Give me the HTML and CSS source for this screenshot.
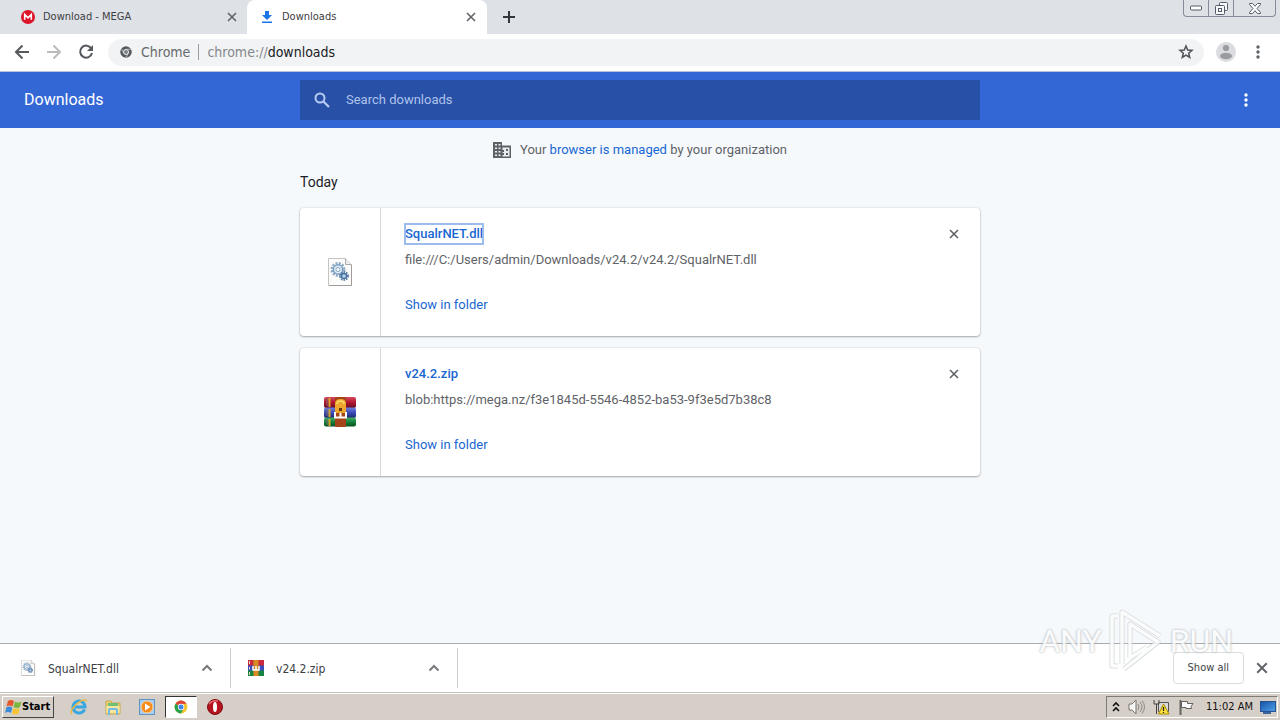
FILE: index.html
```html
<!DOCTYPE html>
<html lang="en">
<head>
<meta charset="utf-8">
<title>Downloads</title>
<link rel="stylesheet" href="styles.css">
</head>
<body>
<svg class="defs" aria-hidden="true">
  <defs>
    <linearGradient id="red" x1="0" y1="0" x2="0" y2="1"><stop offset="0" stop-color="#d8485c"/><stop offset=".5" stop-color="#b01730"/><stop offset="1" stop-color="#650c20"/></linearGradient>
    <linearGradient id="blue" x1="0" y1="0" x2="0" y2="1"><stop offset="0" stop-color="#6f80e0"/><stop offset=".5" stop-color="#3a4cb4"/><stop offset="1" stop-color="#1c2567"/></linearGradient>
    <linearGradient id="green" x1="0" y1="0" x2="0" y2="1"><stop offset="0" stop-color="#46ae68"/><stop offset=".5" stop-color="#14803a"/><stop offset="1" stop-color="#07501e"/></linearGradient>
    <linearGradient id="screen" x1="0" y1="0" x2="1" y2="1"><stop offset="0" stop-color="#1452a8"/><stop offset="1" stop-color="#4fa0e8"/></linearGradient>
  </defs>
  <symbol id="close" viewBox="0 0 10 10"><path d="M1 1l8 8M9 1L1 9" fill="none" stroke="currentColor" stroke-width="1.6"/></symbol>
  <symbol id="dots" viewBox="0 0 4 14"><g fill="currentColor"><circle cx="2" cy="2" r="1.7"/><circle cx="2" cy="7" r="1.7"/><circle cx="2" cy="12" r="1.7"/></g></symbol>
  <symbol id="chevron" viewBox="0 0 12 8"><path d="M1.5 6.5L6 2l4.500 4.500" fill="none" stroke="currentColor" stroke-width="2"/></symbol>
  <symbol id="dll" viewBox="0 0 24 28">
    <path d="M.5.5h17l6 6v21H.5z" fill="#fcfcfa" stroke="#c5c3c2"/>
    <path d="M1 27.500h22.500V7" fill="none" stroke="#a09c9b"/>
    <path d="M17.500.5v6h6" fill="#eee" stroke="#b0aaaa"/>
    <circle cx="10" cy="11.500" r="6.300" fill="none" stroke="#8fabc5" stroke-width="2.400" stroke-dasharray="2 1.300"/>
    <circle cx="10" cy="11.500" r="4.700" fill="#dceaf5" stroke="#7b9dbf" stroke-width="1.400"/>
    <circle cx="10" cy="11.500" r="2" fill="#fff" stroke="#84a5c0"/>
    <circle cx="16" cy="18" r="3.900" fill="none" stroke="#5b7da4" stroke-width="2" stroke-dasharray="1.500 1"/>
    <circle cx="16" cy="18" r="2.500" fill="#b6d3e8" stroke="#456f9f" stroke-width="1.300"/>
  </symbol>
  <symbol id="rar" viewBox="0 0 32 30">
    <rect x="0" y="0" width="32" height="11" rx="2" fill="url(#red)"/>
    <rect x="0" y="10.500" width="32" height="10.500" rx="2" fill="url(#blue)"/>
    <rect x="0" y="20.500" width="32" height="9" rx="2" fill="url(#green)"/>
    <path d="M3 1v8M3 12v7M3 22v6" stroke="#7d6a72" stroke-width="1"/>
    <path d="M5.500 1v9M5.500 12v8M5.500 22v7" stroke="#d9a52e" stroke-width="2"/>
    <rect x="11" y="0" width="11" height="30" rx="1" fill="#a54419"/>
    <path d="M11 16V7q0-5 5.500-5T22 7v9z" fill="#eda62e"/>
    <path d="M13 7q0-3 3.500-3T20 7" fill="none" stroke="#ffe16a" stroke-width="1.500"/>
    <rect x="15" y="11" width="3" height="3" fill="#6d3213"/>
    <path d="M11 15v5.500h11V15M16.500 16v4" fill="none" stroke="#fff" stroke-width="2"/>
  </symbol>
  <symbol id="chrome" viewBox="0 0 24 24">
    <circle cx="12" cy="12" r="11" fill="#f4c430"/>
    <path d="M12 12L2.500 6.500A11 11 0 0 1 21.500 6.500L12 7z" fill="#dc4437"/>
    <path d="M2.500 6.500A11 11 0 0 0 12 23l4.500-8.500L12 12z" fill="#29a04b"/>
    <circle cx="12" cy="12" r="5.500" fill="#fff"/><circle cx="12" cy="12" r="4.300" fill="#4285e8"/>
  </symbol>
</svg>

<header class="tabstrip">
  <div class="tab">
    <svg class="i14" viewBox="0 0 14 14"><circle cx="7" cy="7" r="7" fill="#dc1428"/><path d="M3.700 9.800V4.500L7 7.800l3.300-3.300v5.300" fill="none" stroke="#fff" stroke-width="1.600"/></svg>
    <span class="tab-name">Download - MEGA</span>
    <button class="plain" aria-label="Close Download - MEGA"><svg class="i10"><use href="#close"/></svg></button>
  </div>
  <div class="tab active">
    <svg class="i14" viewBox="0 0 14 14"><path d="M5 1h4v4h3L7 10 2 5h3zM2 11.500h10V13H2z" fill="#1a73e8"/></svg>
    <span class="tab-name">Downloads</span>
    <button class="plain" aria-label="Close Downloads"><svg class="i10"><use href="#close"/></svg></button>
  </div>
  <button class="plain new-tab" aria-label="New tab"><svg class="i12" viewBox="0 0 12 12"><path d="M6 0v12M0 6h12" stroke="#33363b" stroke-width="2"/></svg></button>
  <div class="window-buttons">
    <button aria-label="Minimize"><svg width="12" height="6" viewBox="0 0 12 6"><rect x=".5" y="1" width="11" height="4" rx="1" fill="#fff" stroke="#555b68"/></svg></button>
    <button aria-label="Restore"><svg width="13" height="13" viewBox="0 0 13 13"><g fill="#f6f7f9" stroke="#555b68"><rect x="4.500" y=".5" width="8" height="8" rx="1"/><rect x=".5" y="3.500" width="9" height="9" rx="1"/><rect x="3.500" y="6.500" width="3" height="3"/></g></svg></button>
    <button class="wide" aria-label="Close window"><svg width="12" height="11" viewBox="0 0 12 11"><path d="M.5.5h3L6 3.300 8.500.5h3v1L8 5.500l3.500 4v1h-3L6 7.700 3.500 10.500h-3v-1L4 5.500.5 1.500z" fill="#fff" stroke="#555b68"/></svg></button>
  </div>
</header>

<nav class="toolbar">
  <button class="plain" aria-label="Back"><svg class="i16" viewBox="0 0 16 16"><path d="M15 8H2M8.500 1.500L2 8l6.500 6.500" fill="none" stroke="#55585d" stroke-width="2"/></svg></button>
  <button class="plain" aria-label="Forward"><svg class="i16" viewBox="0 0 16 16"><path d="M1 8h13M7.500 1.500L14 8l-6.500 6.500" fill="none" stroke="#babcbe" stroke-width="2"/></svg></button>
  <button class="plain" aria-label="Reload"><svg class="i16" viewBox="0 0 16 16"><path d="M13.300 4.500A6 6 0 1 0 14 9" fill="none" stroke="#55585d" stroke-width="2"/><path d="M15 1v6H9z" fill="#55585d"/></svg></button>
  <div class="omnibox">
    <svg class="i12" viewBox="0 0 24 24"><circle cx="12" cy="12" r="11.500" fill="#55585d"/><circle cx="12" cy="12" r="5" fill="#7b7f83" stroke="#f1f3f4" stroke-width="2"/><path d="M12 6.500h10M7.500 14.500L3 6M16.500 14.500L12 23" stroke="#d0d3d5" stroke-width="1.500"/></svg>
    <span class="scheme">Chrome</span>
    <span class="divider"></span>
    <span class="url">chrome://<b>downloads</b></span>
    <button class="plain" aria-label="Bookmark this page"><svg class="i16" viewBox="0 0 16 16"><path d="M8 2l1.700 4 4.300.4-3.300 2.800 1 4.300L8 11.200l-3.700 2.300 1-4.300L2 6.400 6.300 6z" fill="none" stroke="#505357" stroke-width="1.500"/></svg></button>
  </div>
  <button class="plain profile" aria-label="Profile"><svg class="i20" viewBox="0 0 20 20"><circle cx="10" cy="10" r="10" fill="#dadcdf"/><circle cx="10" cy="6" r="3.100" fill="#999b9e"/><ellipse cx="10" cy="14" rx="6" ry="3.200" fill="#999b9e"/></svg></button>
  <button class="plain menu" aria-label="Menu"><svg class="dots"><use href="#dots"/></svg></button>
</nav>

<div class="page-header">
  <h1>Downloads</h1>
  <label class="search">
    <svg class="i16" viewBox="0 0 16 16"><circle cx="6" cy="6" r="4.500" fill="none" stroke="#b8cbf3" stroke-width="2"/><path d="M9.500 9.500l5.500 5.500" stroke="#b8cbf3" stroke-width="2.200"/></svg>
    <input type="text" placeholder="Search downloads" aria-label="Search downloads">
  </label>
  <button class="plain more" aria-label="More actions"><svg class="dots"><use href="#dots"/></svg></button>
</div>

<main>
  <p class="managed">
    <svg width="18" height="16" viewBox="0 0 18 16"><path d="M0 0h9v3.500h9V16H0z" fill="#5f6368"/><path d="M2 2h2v1.500H2zm3.500 0h2v1.500h-2zM2 5.500h2V7H2zm3.500 0h2V7h-2zM2 9h2v1.500H2zm3.500 0h2v1.500h-2zM2 12.500h2V14H2zm3.500 0h2V14h-2zM9.500 5.500h7v9h-7z" fill="#e8edf1"/><path d="M9 8h2v2H9zm4-1h2v2h-2zm0 4h2v2h-2zm-4 0h2v2H9z" fill="#5f6368"/></svg>
    <span>Your <a href="#">browser is managed</a> by your organization</span>
  </p>
  <h2>Today</h2>
  <article class="card">
    <div class="file-icon"><svg width="24" height="28"><use href="#dll"/></svg></div>
    <div class="details">
      <a class="name focused" href="#">SqualrNET.dll</a>
      <span class="source">file:///C:/Users/admin/Downloads/v24.2/v24.2/SqualrNET.dll</span>
      <a class="show" href="#">Show in folder</a>
    </div>
    <button class="plain remove" aria-label="Remove from list"><svg class="i10"><use href="#close"/></svg></button>
  </article>
  <article class="card">
    <div class="file-icon"><svg width="32" height="30"><use href="#rar"/></svg></div>
    <div class="details">
      <a class="name" href="#">v24.2.zip</a>
      <span class="source">blob:https://mega.nz/f3e1845d-5546-4852-ba53-9f3e5d7b38c8</span>
      <a class="show" href="#">Show in folder</a>
    </div>
    <button class="plain remove" aria-label="Remove from list"><svg class="i10"><use href="#close"/></svg></button>
  </article>
</main>

<section class="shelf">
  <div class="shelf-item">
    <svg width="16" height="16"><use href="#dll"/></svg>
    <span>SqualrNET.dll</span>
    <button class="plain" aria-label="Options for SqualrNET.dll"><svg width="12" height="8"><use href="#chevron"/></svg></button>
  </div>
  <div class="shelf-item">
    <svg width="16" height="16" viewBox="0 0 16 16"><path fill="#c92b3e" d="M0 0h16v6H0z"/><path fill="#394dbb" d="M0 5.500h16V11H0z"/><path fill="#198441" d="M0 10.500h16V16H0z"/><path fill="#d88a25" d="M5.500 0h5v16h-5z"/><path d="M1.500 1v3M1.500 7v2.500M1.500 12v3" stroke="#e9dcb4"/><path d="M5 6v4h6V6M8 6v4" fill="none" stroke="#fff" stroke-width="1.500"/></svg>
    <span>v24.2.zip</span>
    <button class="plain" aria-label="Options for v24.2.zip"><svg width="12" height="8"><use href="#chevron"/></svg></button>
  </div>
  <button class="show-all">Show all</button>
  <button class="plain shelf-close" aria-label="Close downloads bar"><svg class="i12"><use href="#close"/></svg></button>
  <div class="watermark">
    <span>ANY</span>
    <svg width="56" height="64" viewBox="0 0 56 64"><g fill="none" stroke="#ccd0d3" stroke-width="5" stroke-linejoin="round"><path d="M10 7H4v50h6M14 55V3l38 24M22 49V15l28 18-34 27M22 49l17-11"/></g><g fill="none" stroke="#fcfdfd" stroke-width="3.500" stroke-linejoin="round"><path d="M10 7H4v50h6M14 55V3l38 24M22 49V15l28 18-34 27M22 49l17-11"/></g></svg>
    <span>RUN</span>
  </div>
</section>

<footer class="taskbar">
  <button class="start">
    <svg width="17" height="16" viewBox="0 0 17 16"><path d="M3 2q3-2 6 0L7.500 7.500q-3-2-6 0z" fill="#e5572a"/><path d="M10 2.500q3 2 6.500 0L15 8q-3 2-6.500 0z" fill="#79b83c"/><path d="M1.300 8.500q3-2 6 0L6 14q-3-2-6 0z" fill="#3d8cdb"/><path d="M8.200 9q3 2 6.500 0L13.500 14.500q-3 2-6.500 0z" fill="#f6c434"/></svg>
    Start
  </button>
  <div class="quick">
    <button class="plain" aria-label="Internet Explorer"><svg class="i18" viewBox="0 0 18 18"><path d="M14.500 11.500A6 6 0 1 1 15 9H5" fill="none" stroke="#37a6e3" stroke-width="3"/><path d="M2 16C-1 13 6 5 12 2.500q4-1.500 4.500 1" fill="none" stroke="#e8b83f" stroke-width="1.500"/></svg></button>
    <button class="plain" aria-label="Explorer"><svg class="i18" viewBox="0 0 18 18"><path d="M2 3h5l1 2h8v11H2z" fill="#e8cf72" stroke="#c8a94d"/><path d="M4 5h10v3H4z" fill="#70bf75"/><path d="M2.500 8h13v7h-13z" fill="#f7e8a1"/><path d="M5 17v-5q0-1 1-1h6q1 0 1 1v5" fill="none" stroke="#72b9e5" stroke-width="2"/></svg></button>
    <button class="plain" aria-label="Media Player"><svg class="i18" viewBox="0 0 18 18"><rect x="1.500" y="1.500" width="15" height="15" fill="#a8cdf0" stroke="#5f92c5"/><circle cx="9" cy="9" r="6" fill="#f68b1f" stroke="#fbd49a"/><path d="M7 5.500v7L12.500 9z" fill="#fff"/></svg></button>
    <button class="plain pressed" aria-label="Chrome"><svg width="14" height="14"><use href="#chrome"/></svg></button>
    <button class="plain" aria-label="Opera"><svg class="i18" viewBox="0 0 18 18"><circle cx="9" cy="9" r="7.500" fill="#b51420" stroke="#7d0a12"/><path d="M3 6q3-4 9-3" stroke="#e66b70" stroke-width="1.500" fill="none"/><ellipse cx="9" cy="9" rx="2" ry="5" fill="#fff"/></svg></button>
  </div>
  <div class="tray">
    <svg width="8" height="12" viewBox="0 0 8 12"><path d="M1 5l3-3 3 3M1 10l3-3 3 3" fill="none" stroke="#111" stroke-width="1.600"/></svg>
    <svg width="17" height="16" viewBox="0 0 17 16"><path d="M1 5h3l4-4v14l-4-4H1z" fill="#f6f6f6" stroke="#77746f"/><path d="M10 5q2 3 0 6M12 3q4 5 0 10M14 1.500q5 6.500 0 13" fill="none" stroke="#8c8983"/></svg>
    <svg width="17" height="16" viewBox="0 0 17 16"><path d="M5.500 3.500h10v9h-10z" fill="#d7dadd" stroke="#55544e"/><path d="M1 1v4h5V1M3.500 5v10M6 14.500h9" stroke="#44433f" fill="none"/><path d="M10.500 5L16 15H5.500z" fill="#fde23a" stroke="#a98a00"/><path d="M10.500 8v4M10.500 13v1" stroke="#222" stroke-width="1.300"/></svg>
    <svg width="17" height="16" viewBox="0 0 17 16"><path d="M2.500 1v15" stroke="#65625e" stroke-width="2"/><path d="M3.500 2.500h6v2h5.500l-2 3 .5 2H8v-1H3.500z" fill="#fcfcfc" stroke="#65625e"/></svg>
    <time>11:02 AM</time>
    <svg width="16" height="14" viewBox="0 0 16 14"><rect x=".5" y="1.500" width="15" height="10" fill="url(#screen)" stroke="#26538f"/><path d="M3 13h8" stroke="#38659c" stroke-width="2"/></svg>
  </div>
</footer>
</body>
</html>
```
FILE: styles.css
```css
* { box-sizing: border-box; }
body {
  margin: 0;
  min-height: 100vh;
  display: flex;
  flex-direction: column;
  background: #f6f9fc;
  color: #5f6368;
  font: 13px/20px Roboto, sans-serif;
}
svg { display: block; flex: none; }
a { color: #1967d2; text-decoration: none; }
h1, h2, p { margin: 0; font-weight: 400; }
.defs { position: absolute; width: 0; height: 0; }
.plain { border: 0; padding: 0; background: none; color: #5f6368; display: flex; align-items: center; justify-content: center; }
.i10 { width: 10px; height: 10px; }
.i12 { width: 12px; height: 12px; }
.i14 { width: 14px; height: 14px; }
.i16 { width: 16px; height: 16px; }
.i18 { width: 18px; height: 18px; }
.i20 { width: 20px; height: 20px; }
.dots { width: 4px; height: 14px; }

.tabstrip { display: flex; height: 34px; background: #dee1e6; font: 11px/16px "DejaVu Sans Condensed", "Noto Sans", sans-serif; color: #3c4043; }
.tab { display: flex; align-items: center; gap: 8px; width: 240px; padding: 0 11px 0 14px; }
.tab:first-child { width: 247px; padding: 0 10px 0 21px; }
.tab.active { background: #fff; border-radius: 8px 8px 0 0; padding-left: 13px; }
.tab-name { flex: 1; }
.new-tab { width: 44px; }
.window-buttons { display: flex; margin: 0 4px 0 auto; height: 17px; border: 1px solid #858b98; border-top: 0; border-radius: 0 0 4px 4px; }
.window-buttons button { display: flex; align-items: center; justify-content: center; width: 25px; padding: 0; border: 0; border-right: 1px solid #858b98; background: none; }
.window-buttons .wide { width: 41px; border-right: 0; }

.toolbar { display: flex; align-items: center; gap: 16px; height: 38px; padding: 0 16px 1px 14px; background: #fff; border-bottom: 1px solid #b8c4dc; }
.omnibox { flex: 1; display: flex; align-items: center; height: 27px; margin-left: -2px; padding: 0 10px 0 12px; border-radius: 14px; background: #f1f3f4; font: 14px/20px "DejaVu Sans Condensed", "Noto Sans", sans-serif; color: #85888c; }
.scheme { margin-left: 9px; color: #66696d; }
.divider { width: 1px; height: 16px; margin: 0 8px; background: #9b9ea2; }
.url { flex: 1; }
.url b { font-weight: 400; color: #202124; }
.profile { margin-left: -4px; }
.menu { width: 12px; }

.page-header { display: grid; grid-template-columns: 1fr minmax(0, 680px) 1fr; align-items: center; height: 56px; background: #3367d6; color: #fff; }
.page-header h1 { padding-left: 24px; font-size: 16px; line-height: 24px; }
.search { display: flex; align-items: center; gap: 16px; height: 40px; padding: 0 14px; background: #2850a7; }
.search input { flex: 1; border: 0; padding: 0; background: none; outline: 0; color: #fff; font: inherit; }
.search input::placeholder { color: #afc3ec; opacity: 1; }
.more { justify-self: end; width: 20px; margin-right: 24px; color: #fff; }

main { flex: 1; width: 100%; max-width: 680px; margin: 0 auto; padding-top: 12px; }
.managed { display: flex; align-items: center; justify-content: center; gap: 9px; }
h2 { margin: 12px 0 16px; font-size: 14px; line-height: 20px; color: #202124; }
.card { display: flex; min-height: 128px; margin-bottom: 12px; border-radius: 4px; background: #fff; box-shadow: 0 1px 2px rgba(60, 64, 67, .4), 0 0 2px rgba(60, 64, 67, .2); }
.file-icon { display: flex; align-items: center; justify-content: center; width: 81px; border-right: 1px solid #d5d7da; }
.details { flex: 1; display: flex; flex-direction: column; align-items: flex-start; padding: 16px 24px; }
.name { font-weight: 500; }
.focused { outline: 2px solid #9cbcf0; outline-offset: -1px; }
.source { margin: 6px 0 25px; }
.remove { width: 20px; height: 20px; margin: 16px 16px 0 0; }

.shelf { position: relative; display: flex; align-items: center; height: 50px; padding-bottom: 1px; border-top: 1px solid #a9abad; border-bottom: 1px solid #c3c1bc; background: #fff; font: 12px/20px "DejaVu Sans Condensed", "Noto Sans", sans-serif; color: #3c4043; }
.shelf-item { display: flex; align-items: center; gap: 12px; width: 227px; height: 40px; padding: 0 17px; border-right: 1px solid #c9cbcd; }
.shelf-item:first-child { width: 231px; padding-left: 20px; }
.shelf-item span { flex: 1; padding-top: 3px; }
.shelf-item button { color: #77797d; }
.show-all { height: 32px; margin-left: auto; padding: 0 14px; border: 1px solid #dadce0; border-radius: 4px; background: #fff; color: #3c4043; font: 11px/16px "DejaVu Sans Condensed", "Noto Sans", sans-serif; }
.shelf-close { margin: 0 12px; }
.watermark { position: absolute; right: 47px; bottom: 19px; display: flex; align-items: center; gap: 6px; color: #fbfcfc; font: 32px/32px Roboto, sans-serif; text-shadow: 0 0 2px #b0b4b8, 0 0 3px #bfc3c6; opacity: .8; pointer-events: none; }

.taskbar { display: flex; align-items: center; height: 27px; padding: 0 0 0 2px; border-top: 1px solid #fff; background: #d6cfc7; color: #111; font: 11px/16px "DejaVu Sans Condensed", "Noto Sans", sans-serif; }
.start { display: flex; align-items: center; height: 22px; padding: 0 3px 0 2px; border: 1px solid; border-color: #fff #444 #444 #fff; background: #d6cfc7; color: #000; font: bold 11px/16px "DejaVu Sans Condensed", "Noto Sans", sans-serif; }
.quick { display: flex; align-items: center; gap: 2px; margin-left: 9px; }
.quick button { width: 32px; height: 22px; }
.quick .pressed { background: #fff; border: 1px solid; border-color: #333 #fff #fff #333; }
.tray { display: flex; align-items: center; gap: 8px; height: 22px; margin: 0 2px 0 auto; padding: 0 1px 0 5px; border: 1px solid; border-color: #7f7b75 #fff #fff #7f7b75; }
.tray time { margin: 0 -1px 0 3px; }
```
